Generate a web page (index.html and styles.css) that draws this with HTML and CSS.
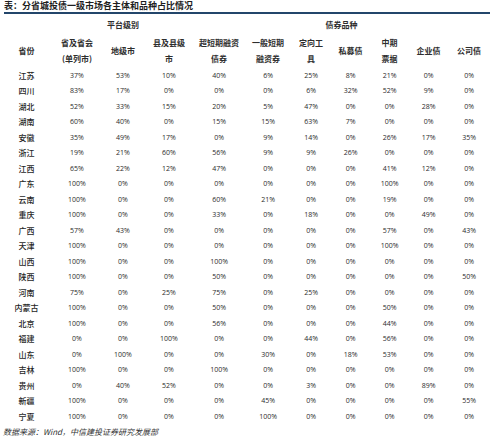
FILE: index.html
```html
<!DOCTYPE html>
<html lang="zh">
<head>
<meta charset="utf-8">
<link rel="stylesheet" href="styles.css">
</head>
<body>
<div class="page">
  <div class="title">表：分省城投债一级市场各主体和品种占比情况</div>
  <table class="grid">
    <colgroup>
      <col class="c0"><col class="c1"><col class="c2"><col class="c3"><col class="c4"><col class="c5"><col class="c6"><col class="c7"><col class="c8"><col class="c9"><col class="c10">
    </colgroup>
    <thead>
      <tr class="group">
        <th></th>
        <th colspan="3">平台级别</th>
        <th colspan="7">债券品种</th>
      </tr>
      <tr class="heads">
        <th>省份</th>
        <th>省及省会<br>(单列市)</th>
        <th>地级市</th>
        <th>县及县级<br>市</th>
        <th>超短期融资<br>债券</th>
        <th>一般短期<br>融资券</th>
        <th>定向工<br>具</th>
        <th>私募债</th>
        <th>中期<br>票据</th>
        <th>企业债</th>
        <th>公司债</th>
      </tr>
    </thead>
    <tbody>
      <tr><td class="prov">江苏</td><td>37%</td><td>53%</td><td>10%</td><td>40%</td><td>6%</td><td>25%</td><td>8%</td><td>21%</td><td>0%</td><td>0%</td></tr>
      <tr><td class="prov">四川</td><td>83%</td><td>17%</td><td>0%</td><td>0%</td><td>0%</td><td>6%</td><td>32%</td><td>52%</td><td>9%</td><td>0%</td></tr>
      <tr><td class="prov">湖北</td><td>52%</td><td>33%</td><td>15%</td><td>20%</td><td>5%</td><td>47%</td><td>0%</td><td>0%</td><td>28%</td><td>0%</td></tr>
      <tr><td class="prov">湖南</td><td>60%</td><td>40%</td><td>0%</td><td>15%</td><td>15%</td><td>63%</td><td>7%</td><td>0%</td><td>0%</td><td>0%</td></tr>
      <tr><td class="prov">安徽</td><td>35%</td><td>49%</td><td>17%</td><td>0%</td><td>9%</td><td>14%</td><td>0%</td><td>26%</td><td>17%</td><td>35%</td></tr>
      <tr><td class="prov">浙江</td><td>19%</td><td>21%</td><td>60%</td><td>56%</td><td>9%</td><td>9%</td><td>26%</td><td>0%</td><td>0%</td><td>0%</td></tr>
      <tr><td class="prov">江西</td><td>65%</td><td>22%</td><td>12%</td><td>47%</td><td>0%</td><td>0%</td><td>0%</td><td>41%</td><td>12%</td><td>0%</td></tr>
      <tr><td class="prov">广东</td><td>100%</td><td>0%</td><td>0%</td><td>0%</td><td>0%</td><td>0%</td><td>0%</td><td>100%</td><td>0%</td><td>0%</td></tr>
      <tr><td class="prov">云南</td><td>100%</td><td>0%</td><td>0%</td><td>60%</td><td>21%</td><td>0%</td><td>0%</td><td>19%</td><td>0%</td><td>0%</td></tr>
      <tr><td class="prov">重庆</td><td>100%</td><td>0%</td><td>0%</td><td>33%</td><td>0%</td><td>18%</td><td>0%</td><td>0%</td><td>49%</td><td>0%</td></tr>
      <tr><td class="prov">广西</td><td>57%</td><td>43%</td><td>0%</td><td>0%</td><td>0%</td><td>0%</td><td>0%</td><td>57%</td><td>0%</td><td>43%</td></tr>
      <tr><td class="prov">天津</td><td>100%</td><td>0%</td><td>0%</td><td>0%</td><td>0%</td><td>0%</td><td>0%</td><td>100%</td><td>0%</td><td>0%</td></tr>
      <tr><td class="prov">山西</td><td>100%</td><td>0%</td><td>0%</td><td>100%</td><td>0%</td><td>0%</td><td>0%</td><td>0%</td><td>0%</td><td>0%</td></tr>
      <tr><td class="prov">陕西</td><td>100%</td><td>0%</td><td>0%</td><td>50%</td><td>0%</td><td>0%</td><td>0%</td><td>0%</td><td>0%</td><td>50%</td></tr>
      <tr><td class="prov">河南</td><td>75%</td><td>0%</td><td>25%</td><td>75%</td><td>0%</td><td>25%</td><td>0%</td><td>0%</td><td>0%</td><td>0%</td></tr>
      <tr><td class="prov">内蒙古</td><td>100%</td><td>0%</td><td>0%</td><td>50%</td><td>0%</td><td>0%</td><td>0%</td><td>50%</td><td>0%</td><td>0%</td></tr>
      <tr><td class="prov">北京</td><td>100%</td><td>0%</td><td>0%</td><td>56%</td><td>0%</td><td>0%</td><td>0%</td><td>44%</td><td>0%</td><td>0%</td></tr>
      <tr><td class="prov">福建</td><td>0%</td><td>0%</td><td>100%</td><td>0%</td><td>0%</td><td>44%</td><td>0%</td><td>56%</td><td>0%</td><td>0%</td></tr>
      <tr><td class="prov">山东</td><td>0%</td><td>100%</td><td>0%</td><td>0%</td><td>30%</td><td>0%</td><td>18%</td><td>53%</td><td>0%</td><td>0%</td></tr>
      <tr><td class="prov">吉林</td><td>100%</td><td>0%</td><td>0%</td><td>100%</td><td>0%</td><td>0%</td><td>0%</td><td>0%</td><td>0%</td><td>0%</td></tr>
      <tr><td class="prov">贵州</td><td>0%</td><td>40%</td><td>52%</td><td>0%</td><td>0%</td><td>3%</td><td>0%</td><td>0%</td><td>89%</td><td>0%</td></tr>
      <tr><td class="prov">新疆</td><td>100%</td><td>0%</td><td>0%</td><td>0%</td><td>45%</td><td>0%</td><td>0%</td><td>0%</td><td>0%</td><td>55%</td></tr>
      <tr><td class="prov">宁夏</td><td>100%</td><td>0%</td><td>0%</td><td>0%</td><td>100%</td><td>0%</td><td>0%</td><td>0%</td><td>0%</td><td>0%</td></tr>
    </tbody>
  </table>
  <div class="source">数据来源：Wind，中信建投证券研究发展部</div>
</div>
</body>
</html>
```

FILE: styles.css
```css
html, body {
  margin: 0;
  padding: 0;
  background: #ffffff;
}

.page {
  width: 500px;
  font-family: "Noto Sans CJK SC", "Liberation Sans", sans-serif;
  color: #2a2a2a;
}

.title {
  margin-left: 4px;
  width: 486px;
  height: 12px;
  line-height: 12px;
  font-size: 9px;
  font-weight: 700;
  color: #1e1e1e;
  border-bottom: 2px solid #23466b;
  white-space: nowrap;
}

.grid {
  table-layout: fixed;
  width: 490px;
  border-collapse: collapse;
  margin-top: 2px;
}

.c0 { width: 53px; }
.c1 { width: 48px; }
.c2 { width: 44px; }
.c3 { width: 48px; }
.c4 { width: 52px; }
.c5 { width: 46px; }
.c6 { width: 40px; }
.c7 { width: 39px; }
.c8 { width: 39px; }
.c9 { width: 39px; }
.c10 { width: 42px; }

.grid th,
.grid td {
  padding: 0;
  text-align: center;
  vertical-align: middle;
  white-space: nowrap;
}

.grid th {
  font-size: 8px;
  font-weight: 700;
  color: #2e2e2e;
  line-height: 16px;
}

.group th {
  height: 16px;
  padding-top: 1px;
}

.heads th {
  height: 35px;
}

.grid tbody tr {
  height: 15.5px;
}

.grid td {
  line-height: 10px;
  font-family: "Open Sans", "Liberation Sans", sans-serif;
  font-size: 7px;
  color: #2b2b2b;
}

.grid td.prov {
  font-family: "Noto Sans CJK SC", sans-serif;
  font-size: 8px;
  font-weight: 500;
  color: #1f1f1f;
}

.source {
  margin-left: 3px;
  margin-top: 2px;
  font-size: 8px;
  line-height: 9px;
  font-style: italic;
  color: #333333;
  white-space: nowrap;
}
```
